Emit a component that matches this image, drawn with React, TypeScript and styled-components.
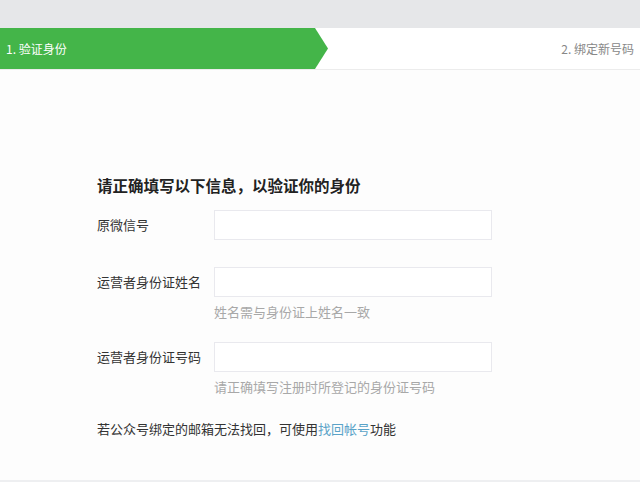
import styled, { createGlobalStyle } from "styled-components";

const GlobalStyle = createGlobalStyle`
  html, body {
    margin: 0;
    padding: 0;
    background: #fdfdfd;
  }
  body {
    font-family: "Noto Sans CJK SC", "Liberation Sans", sans-serif;
    color: #333;
  }
`;

const Page = styled.div`
  width: 640px;
  height: 482px;
  display: flex;
  flex-direction: column;
  overflow: hidden;
`;

const TopBand = styled.div`
  height: 28px;
  background: #e6e7e9;
  flex-shrink: 0;
`;

const StepBar = styled.div`
  height: 41px;
  display: flex;
  align-items: center;
  justify-content: space-between;
  background: #fff;
  border-bottom: 1px solid #ececec;
  flex-shrink: 0;
`;

const ActiveStep = styled.div`
  width: 328px;
  height: 100%;
  background: #44b549;
  color: #fff;
  font-size: 12px;
  display: flex;
  align-items: center;
  padding-left: 6px;
  box-sizing: border-box;
  clip-path: polygon(0 0, 315px 0, 328px 50%, 315px 100%, 0 100%);
`;

const NextStep = styled.div`
  color: #888;
  font-size: 12px;
  padding-right: 6px;
`;

const Content = styled.div`
  flex: 1;
  padding: 103px 0 0 97px;
  background: #fdfdfd;
  border-bottom: 2px solid #eeeff1;
`;

const Title = styled.h2`
  margin: 0 0 13px;
  font-size: 15.5px;
  font-weight: bold;
  line-height: 24px;
  color: #222;
`;

const Row = styled.div<{ $gap: number }>`
  display: grid;
  grid-template-columns: 117px 278px;
  margin-top: ${({ $gap }) => $gap}px;
`;

const Label = styled.label`
  font-size: 13px;
  line-height: 30px;
  color: #333;
`;

const Input = styled.input`
  height: 30px;
  box-sizing: border-box;
  border: 1px solid #e9e9ee;
  background: #fff;
  outline: none;
  padding: 0 8px;
  font-size: 13px;
`;

const Hint = styled.div`
  grid-column: 2;
  margin-top: 5px;
  font-size: 13px;
  line-height: 20px;
  color: #a8a8a8;
`;

const Footnote = styled.p`
  margin: 22px 0 0;
  font-size: 13px;
  line-height: 20px;
  color: #333;
`;

const Link = styled.a`
  color: #5aa3c8;
  text-decoration: none;
`;

export default function App() {
  return (
    <Page>
      <GlobalStyle />
      <TopBand />
      <StepBar>
        <ActiveStep>1. 验证身份</ActiveStep>
        <NextStep>2. 绑定新号码</NextStep>
      </StepBar>
      <Content>
        <Title>请正确填写以下信息，以验证你的身份</Title>
        <Row $gap={0}>
          <Label>原微信号</Label>
          <Input />
        </Row>
        <Row $gap={27}>
          <Label>运营者身份证姓名</Label>
          <Input />
          <Hint>姓名需与身份证上姓名一致</Hint>
        </Row>
        <Row $gap={20}>
          <Label>运营者身份证号码</Label>
          <Input />
          <Hint>请正确填写注册时所登记的身份证号码</Hint>
        </Row>
        <Footnote>
          若公众号绑定的邮箱无法找回，可使用<Link href="#">找回帐号</Link>功能
        </Footnote>
      </Content>
    </Page>
  );
}
